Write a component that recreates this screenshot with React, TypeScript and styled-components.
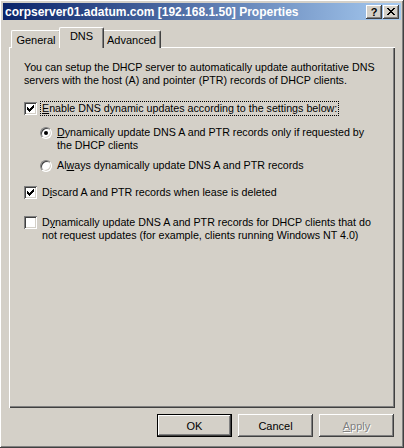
import React from 'react';
import styled, { createGlobalStyle } from 'styled-components';

const GlobalStyle = createGlobalStyle`
    html, body {
        margin: 0;
        padding: 0;
        background: #d4d0c8;
    }
    * {
        box-sizing: border-box;
    }
`;

const FONT = `"Liberation Sans", Arial, sans-serif`;

const raised = `
    box-shadow: inset -1px -1px #404040, inset 1px 1px #ffffff,
        inset -2px -2px #808080, inset 2px 2px #d4d0c8;
`;

const Window = styled.div`
    width: 404px;
    height: 448px;
    padding: 3px;
    background: #d4d0c8;
    font-family: ${FONT};
    font-size: 10.7px;
    color: #000;
    display: flex;
    flex-direction: column;
    ${raised}
`;

const TitleBar = styled.div`
    height: 18px;
    display: flex;
    align-items: center;
    padding: 0 2px 0 2px;
    background: linear-gradient(to right, #0a246a, #a6caf0);
`;

const Title = styled.div`
    flex: 1;
    color: #fff;
    font-weight: bold;
    font-size: 12px;
    white-space: nowrap;
    padding-left: 0;
`;

const CaptionButton = styled.div<{ $gap?: number }>`
    width: 16px;
    height: 14px;
    margin-left: ${(p) => p.$gap ?? 0}px;
    display: flex;
    align-items: center;
    justify-content: center;
    background: #d4d0c8;
    font-weight: bold;
    font-size: 11px;
    ${raised}
`;

const Body = styled.div`
    flex: 1;
    display: flex;
    flex-direction: column;
    padding: 7px 6px 8px 6px;
`;

const TabStrip = styled.div`
    display: flex;
    align-items: flex-end;
    height: 21px;
    padding-left: 2px;
    position: relative;
    z-index: 1;
    margin-bottom: -1px;
`;

const Tab = styled.div<{ $w: number; $active?: boolean }>`
    width: ${(p) => p.$w}px;
    height: ${(p) => (p.$active ? 21 : 18)}px;
    margin: 0 ${(p) => (p.$active ? -2 : 0)}px;
    ${(p) => (p.$active ? 'position: relative; z-index: 2;' : '')}
    background: #d4d0c8;
    border-top: 1px solid #fff;
    border-left: 1px solid #fff;
    border-right: 1px solid #404040;
    box-shadow: inset -1px 0 #808080;
    border-top-left-radius: 2px;
    border-top-right-radius: 2px;
    text-align: center;
    padding-top: ${(p) => (p.$active ? 2 : 3)}px;
    line-height: 13px;
    font-size: 11px;
`;

const Panel = styled.div`
    height: 361px;
    padding: 14px 14px 0 14px;
    box-shadow: inset 1px 1px #ffffff, inset -1px -1px #404040,
        inset -2px -2px #808080;
    display: flex;
    flex-direction: column;
    white-space: nowrap;
`;

const Para = styled.p`
    margin: 0;
    line-height: 13px;
    padding-left: 1px;
`;

const Row = styled.div<{ $top: number; $indent?: number }>`
    display: flex;
    align-items: flex-start;
    margin-top: ${(p) => p.$top}px;
    padding-left: ${(p) => p.$indent ?? 1}px;
    line-height: 13px;
`;

const Box = styled.div`
    flex: none;
    width: 13px;
    height: 13px;
    background: #fff;
    display: flex;
    align-items: center;
    justify-content: center;
    box-shadow: inset 1px 1px #808080, inset -1px -1px #ffffff,
        inset 2px 2px #404040, inset -2px -2px #d4d0c8;
`;

const RadioRing = styled.div`
    flex: none;
    width: 12px;
    height: 12px;
    margin-top: 1px;
    border-radius: 50%;
    background: #fff;
    border: 1px solid;
    border-color: #808080 #ffffff #ffffff #808080;
    box-shadow: inset 1px 1px #404040, inset -1px -1px #d4d0c8;
    display: flex;
    align-items: center;
    justify-content: center;
`;

const Dot = styled.div`
    width: 4px;
    height: 4px;
    border-radius: 50%;
    background: #000;
`;

const Label = styled.div<{ $gap: number; $focus?: boolean }>`
    margin-left: ${(p) => (p.$focus ? p.$gap - 1 : p.$gap)}px;
    ${(p) => (p.$focus ? 'outline: 1px dotted #000; padding: 0 1px;' : '')}
`;

const Footer = styled.div`
    display: flex;
    justify-content: flex-end;
    gap: 6px;
    padding-top: 6px;
    padding-right: 1px;
`;

const Button = styled.div<{ $default?: boolean; $disabled?: boolean }>`
    width: 75px;
    height: 23px;
    display: flex;
    align-items: center;
    justify-content: center;
    background: #d4d0c8;
    font-size: 11px;
    color: ${(p) => (p.$disabled ? '#808080' : '#000')};
    ${(p) => (p.$disabled ? 'text-shadow: 1px 1px #fff;' : '')}
    ${(p) =>
        p.$default
            ? `box-shadow: inset 0 0 0 1px #000, inset -2px -2px #404040, inset 2px 2px #ffffff, inset -3px -3px #808080;`
            : `box-shadow: inset -1px -1px #404040, inset 1px 1px #ffffff, inset -2px -2px #808080;`}
`;

const Check = () => (
    <svg width="7" height="7" viewBox="0 0 7 7" shapeRendering="crispEdges">
        {[2, 3, 4, 3, 2, 1, 0].map((y, x) => (
            <rect key={x} x={x} y={y} width="1" height="3" fill="#000" />
        ))}
    </svg>
);

const CloseGlyph = () => (
    <svg width="8" height="7" viewBox="0 0 8 7" shapeRendering="crispEdges">
        {[0, 1, 2, 3, 4, 5, 6].map((i) => (
            <React.Fragment key={i}>
                <rect x={i} y={i} width="2" height="1" fill="#000" />
                <rect x={6 - i} y={i} width="2" height="1" fill="#000" />
            </React.Fragment>
        ))}
    </svg>
);

function CheckBox({ checked }: { checked?: boolean }) {
    return <Box>{checked && <Check />}</Box>;
}

function Radio({ checked }: { checked?: boolean }) {
    return <RadioRing>{checked && <Dot />}</RadioRing>;
}

export default function App() {
    return (
        <>
            <GlobalStyle />
            <Window>
                <TitleBar>
                    <Title>corpserver01.adatum.com [192.168.1.50] Properties</Title>
                    <CaptionButton>?</CaptionButton>
                    <CaptionButton $gap={1}>
                        <CloseGlyph />
                    </CaptionButton>
                </TitleBar>
                <Body>
                    <TabStrip>
                        <Tab $w={50}>General</Tab>
                        <Tab $w={45} $active>
                            DNS
                        </Tab>
                        <Tab $w={59}>Advanced</Tab>
                    </TabStrip>
                    <Panel>
                        <Para>
                            You can setup the DHCP server to automatically update authoritative DNS
                            <br />
                            servers with the host (A) and pointer (PTR) records of DHCP clients.
                        </Para>
                        <Row $top={15}>
                            <CheckBox checked />
                            <Label $gap={5} $focus>
                                <u>E</u>nable DNS dynamic updates according to the settings below:
                            </Label>
                        </Row>
                        <Row $top={11} $indent={17}>
                            <Radio checked />
                            <Label $gap={5}>
                                <u>D</u>ynamically update DNS A and PTR records only if requested by
                                <br />
                                the DHCP clients
                            </Label>
                        </Row>
                        <Row $top={7} $indent={17}>
                            <Radio />
                            <Label $gap={5}>
                                Al<u>w</u>ays dynamically update DNS A and PTR records
                            </Label>
                        </Row>
                        <Row $top={14}>
                            <CheckBox checked />
                            <Label $gap={5}>
                                D<u>i</u>scard A and PTR records when lease is deleted
                            </Label>
                        </Row>
                        <Row $top={17}>
                            <CheckBox />
                            <Label $gap={5}>
                                D<u>y</u>namically update DNS A and PTR records for DHCP clients that do
                                <br />
                                not request updates (for example, clients running Windows NT 4.0)
                            </Label>
                        </Row>
                    </Panel>
                    <Footer>
                        <Button $default>OK</Button>
                        <Button>Cancel</Button>
                        <Button $disabled>
                            <span>
                                <u>A</u>pply
                            </span>
                        </Button>
                    </Footer>
                </Body>
            </Window>
        </>
    );
}
